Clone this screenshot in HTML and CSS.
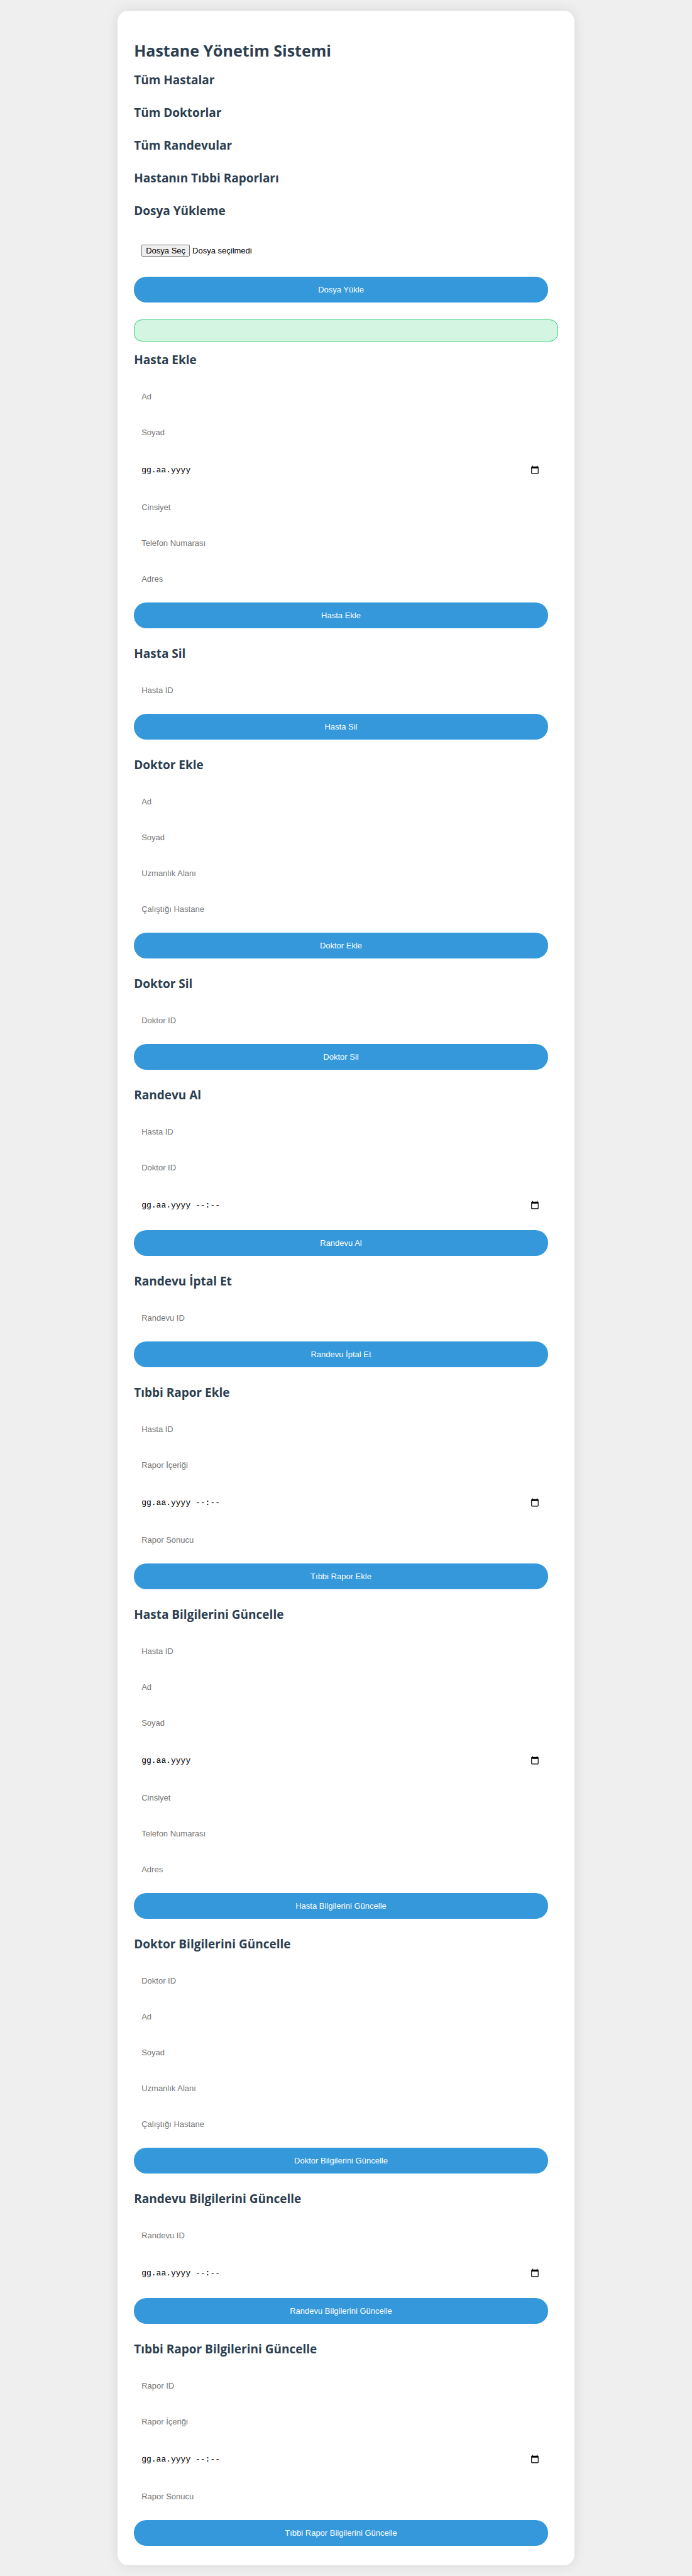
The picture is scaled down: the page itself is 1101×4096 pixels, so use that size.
FILE: index.html
```html
<!DOCTYPE html>
<html lang="tr">
<head>
<meta charset="utf-8">
<meta name="viewport" content="width=device-width, initial-scale=1">
<title>Hastane Yönetim Sistemi</title>
<link rel="stylesheet" href="styles.css">
</head>
<body>
<svg width="0" height="0" class="sprite" aria-hidden="true">
  <symbol id="calendar" viewBox="0 0 24 24"><path d="M20 3h-1V1h-2v2H7V1H5v2H4c-1.1 0-2 .9-2 2v16c0 1.1.9 2 2 2h16c1.1 0 2-.9 2-2V5c0-1.1-.9-2-2-2zm0 18H4V8h16v13z"/></symbol>
</svg>
<main class="card">
  <h1 class="title">Hastane Yönetim Sistemi</h1>
  <h2 class="heading">Tüm Hastalar</h2>
  <h2 class="heading">Tüm Doktorlar</h2>
  <h2 class="heading">Tüm Randevular</h2>
  <h2 class="heading">Hastanın Tıbbi Raporları</h2>

  <h2 class="heading">Dosya Yükleme</h2>
  <form class="form">
    <div class="file-row">
      <input type="file" id="file" aria-label="Dosya" hidden>
      <button type="button" class="file-button" onclick="document.getElementById('file').click()">Dosya Seç</button>
      <span>Dosya seçilmedi</span>
    </div>
    <button type="button" class="submit">Dosya Yükle</button>
  </form>
  <div class="message" role="status"></div>

  <h2 class="heading">Hasta Ekle</h2>
  <form class="form">
    <input class="field" type="text" placeholder="Ad" aria-label="Ad">
    <input class="field" type="text" placeholder="Soyad" aria-label="Soyad">
    <div class="date-row"><input class="date" type="text" placeholder="gg.aa.yyyy" aria-label="Doğum tarihi"><button type="button" class="picker" aria-label="Takvimi aç"><svg class="icon"><use href="#calendar"/></svg></button></div>
    <input class="field" type="text" placeholder="Cinsiyet" aria-label="Cinsiyet">
    <input class="field" type="text" placeholder="Telefon Numarası" aria-label="Telefon Numarası">
    <input class="field" type="text" placeholder="Adres" aria-label="Adres">
    <button type="button" class="submit">Hasta Ekle</button>
  </form>

  <h2 class="heading">Hasta Sil</h2>
  <form class="form">
    <input class="field" type="text" placeholder="Hasta ID" aria-label="Hasta ID">
    <button type="button" class="submit">Hasta Sil</button>
  </form>

  <h2 class="heading">Doktor Ekle</h2>
  <form class="form">
    <input class="field" type="text" placeholder="Ad" aria-label="Ad">
    <input class="field" type="text" placeholder="Soyad" aria-label="Soyad">
    <input class="field" type="text" placeholder="Uzmanlık Alanı" aria-label="Uzmanlık Alanı">
    <input class="field" type="text" placeholder="Çalıştığı Hastane" aria-label="Çalıştığı Hastane">
    <button type="button" class="submit">Doktor Ekle</button>
  </form>

  <h2 class="heading">Doktor Sil</h2>
  <form class="form">
    <input class="field" type="text" placeholder="Doktor ID" aria-label="Doktor ID">
    <button type="button" class="submit">Doktor Sil</button>
  </form>

  <h2 class="heading">Randevu Al</h2>
  <form class="form">
    <input class="field" type="text" placeholder="Hasta ID" aria-label="Hasta ID">
    <input class="field" type="text" placeholder="Doktor ID" aria-label="Doktor ID">
    <div class="date-row"><input class="date" type="text" placeholder="gg.aa.yyyy --:--" aria-label="Randevu tarihi"><button type="button" class="picker" aria-label="Takvimi aç"><svg class="icon"><use href="#calendar"/></svg></button></div>
    <button type="button" class="submit">Randevu Al</button>
  </form>

  <h2 class="heading">Randevu İptal Et</h2>
  <form class="form">
    <input class="field" type="text" placeholder="Randevu ID" aria-label="Randevu ID">
    <button type="button" class="submit">Randevu İptal Et</button>
  </form>

  <h2 class="heading">Tıbbi Rapor Ekle</h2>
  <form class="form">
    <input class="field" type="text" placeholder="Hasta ID" aria-label="Hasta ID">
    <input class="field" type="text" placeholder="Rapor İçeriği" aria-label="Rapor İçeriği">
    <div class="date-row"><input class="date" type="text" placeholder="gg.aa.yyyy --:--" aria-label="Rapor tarihi"><button type="button" class="picker" aria-label="Takvimi aç"><svg class="icon"><use href="#calendar"/></svg></button></div>
    <input class="field" type="text" placeholder="Rapor Sonucu" aria-label="Rapor Sonucu">
    <button type="button" class="submit">Tıbbi Rapor Ekle</button>
  </form>

  <h2 class="heading">Hasta Bilgilerini Güncelle</h2>
  <form class="form">
    <input class="field" type="text" placeholder="Hasta ID" aria-label="Hasta ID">
    <input class="field" type="text" placeholder="Ad" aria-label="Ad">
    <input class="field" type="text" placeholder="Soyad" aria-label="Soyad">
    <div class="date-row"><input class="date" type="text" placeholder="gg.aa.yyyy" aria-label="Doğum tarihi"><button type="button" class="picker" aria-label="Takvimi aç"><svg class="icon"><use href="#calendar"/></svg></button></div>
    <input class="field" type="text" placeholder="Cinsiyet" aria-label="Cinsiyet">
    <input class="field" type="text" placeholder="Telefon Numarası" aria-label="Telefon Numarası">
    <input class="field" type="text" placeholder="Adres" aria-label="Adres">
    <button type="button" class="submit">Hasta Bilgilerini Güncelle</button>
  </form>

  <h2 class="heading">Doktor Bilgilerini Güncelle</h2>
  <form class="form">
    <input class="field" type="text" placeholder="Doktor ID" aria-label="Doktor ID">
    <input class="field" type="text" placeholder="Ad" aria-label="Ad">
    <input class="field" type="text" placeholder="Soyad" aria-label="Soyad">
    <input class="field" type="text" placeholder="Uzmanlık Alanı" aria-label="Uzmanlık Alanı">
    <input class="field" type="text" placeholder="Çalıştığı Hastane" aria-label="Çalıştığı Hastane">
    <button type="button" class="submit">Doktor Bilgilerini Güncelle</button>
  </form>

  <h2 class="heading">Randevu Bilgilerini Güncelle</h2>
  <form class="form">
    <input class="field" type="text" placeholder="Randevu ID" aria-label="Randevu ID">
    <div class="date-row"><input class="date" type="text" placeholder="gg.aa.yyyy --:--" aria-label="Randevu tarihi"><button type="button" class="picker" aria-label="Takvimi aç"><svg class="icon"><use href="#calendar"/></svg></button></div>
    <button type="button" class="submit">Randevu Bilgilerini Güncelle</button>
  </form>

  <h2 class="heading">Tıbbi Rapor Bilgilerini Güncelle</h2>
  <form class="form">
    <input class="field" type="text" placeholder="Rapor ID" aria-label="Rapor ID">
    <input class="field" type="text" placeholder="Rapor İçeriği" aria-label="Rapor İçeriği">
    <div class="date-row"><input class="date" type="text" placeholder="gg.aa.yyyy --:--" aria-label="Rapor tarihi"><button type="button" class="picker" aria-label="Takvimi aç"><svg class="icon"><use href="#calendar"/></svg></button></div>
    <input class="field" type="text" placeholder="Rapor Sonucu" aria-label="Rapor Sonucu">
    <button type="button" class="submit">Tıbbi Rapor Bilgilerini Güncelle</button>
  </form>
</main>
</body>
</html>
```
FILE: styles.css
```css
* {
  box-sizing: border-box;
}

body {
  margin: 0;
  padding: 17px 0;
  background: #efefef;
  color: #2c3e50;
  font-family: "Open Sans", "Noto Sans", sans-serif;
}

.sprite {
  display: none;
}

.card {
  width: 66%;
  margin: 0 auto;
  padding: 45px 26px 31px;
  background: #fff;
  border-radius: 17px;
  box-shadow: 0 0 20px rgba(0, 0, 0, 0.1);
}

.title {
  margin: 0;
  font-size: 25px;
  line-height: 36px;
  font-weight: 700;
}

.heading {
  margin: 16px 0 25px;
  font-size: 19px;
  line-height: 27px;
  font-weight: 700;
}

.form {
  display: flex;
  flex-direction: column;
  margin: -9px 16px 27px 0;
}

.form:last-child {
  margin-bottom: 0;
}

.field,
.date {
  width: 100%;
  padding: 0 12px;
  border: 0;
  background: transparent;
  outline: none;
  font-family: "Liberation Sans", Arial, sans-serif;
  font-size: 13px;
}

.field {
  height: 57px;
}

.field::placeholder {
  color: #757575;
}

.date-row {
  display: flex;
  align-items: center;
  height: 62px;
  padding-right: 14px;
}

.date {
  flex: 1;
  height: 44px;
  font-family: "Liberation Mono", monospace;
}

.date::placeholder {
  color: #000;
}

.picker {
  display: flex;
  padding: 0;
  border: 0;
  background: none;
  color: #000;
}

.icon {
  width: 14px;
  height: 14px;
  fill: currentColor;
}

.file-row {
  display: flex;
  align-items: center;
  gap: 4px;
  height: 66px;
  padding-left: 12px;
  color: #000;
  font-family: "Liberation Sans", Arial, sans-serif;
  font-size: 13px;
}

.file-button {
  height: 19px;
  padding: 0 6px;
  border: 1px solid #767676;
  border-radius: 2px;
  background: #efefef;
  color: #000;
  font: inherit;
}

.submit {
  height: 41px;
  margin-top: 9px;
  border: 0;
  border-radius: 20px;
  background: #3498db;
  color: #fff;
  font-family: "Liberation Sans", Arial, sans-serif;
  font-size: 13px;
}

.message {
  height: 35px;
  border: 1px solid #2ecc71;
  border-radius: 13px;
  background: #d5f5e3;
}
```
